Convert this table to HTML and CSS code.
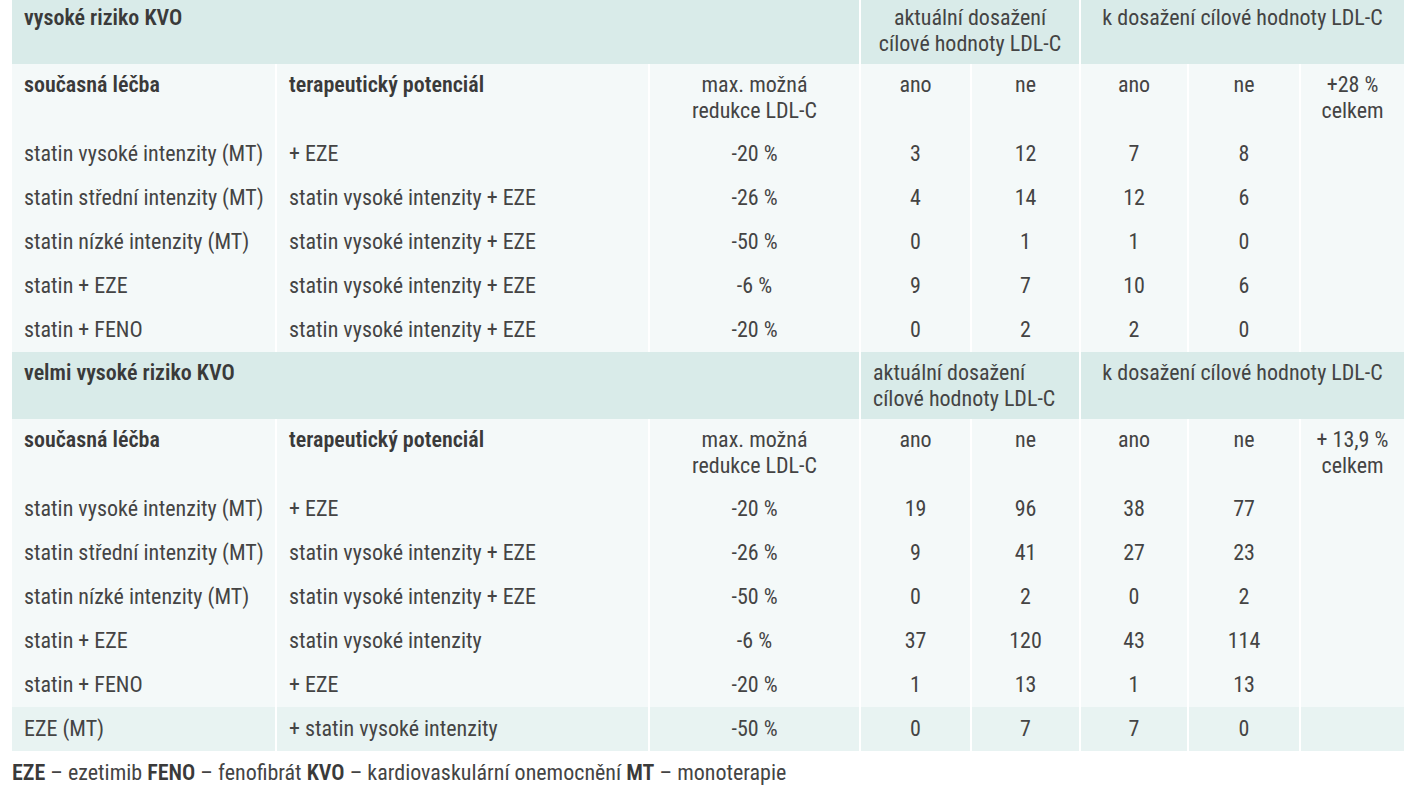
FILE: index.html
```html
<!DOCTYPE html>
<html lang="cs">
<head>
<meta charset="utf-8">
<title>Tabulka</title>
<link rel="stylesheet" href="styles.css">
</head>
<body>
<div class="wrap">
<table class="tbl">
<colgroup>
<col class="c1"><col class="c2"><col class="c3"><col class="c4"><col class="c5"><col class="c6"><col class="c7"><col class="c8">
</colgroup>
<tbody>
<tr class="sec sec1">
  <td colspan="3" class="sec-title">vysoké riziko KVO</td>
  <td colspan="2" class="center">aktuální dosažení<br>cílové hodnoty LDL-C</td>
  <td colspan="3" class="center">k dosažení cílové hodnoty LDL-C</td>
</tr>
<tr class="colhead">
  <td class="b">současná léčba</td>
  <td class="b">terapeutický potenciál</td>
  <td class="center">max. možná<br>redukce LDL-C</td>
  <td class="center">ano</td>
  <td class="center">ne</td>
  <td class="center">ano</td>
  <td class="center">ne</td>
  <td class="center">+28 %<br>celkem</td>
</tr>
<tr class="row"><td>statin vysoké intenzity (MT)</td><td>+ EZE</td><td class="center">-20 %</td><td class="center">3</td><td class="center">12</td><td class="center">7</td><td class="center">8</td><td></td></tr>
<tr class="row"><td>statin střední intenzity (MT)</td><td>statin vysoké intenzity + EZE</td><td class="center">-26 %</td><td class="center">4</td><td class="center">14</td><td class="center">12</td><td class="center">6</td><td></td></tr>
<tr class="row"><td>statin nízké intenzity (MT)</td><td>statin vysoké intenzity + EZE</td><td class="center">-50 %</td><td class="center">0</td><td class="center">1</td><td class="center">1</td><td class="center">0</td><td></td></tr>
<tr class="row"><td>statin + EZE</td><td>statin vysoké intenzity + EZE</td><td class="center">-6 %</td><td class="center">9</td><td class="center">7</td><td class="center">10</td><td class="center">6</td><td></td></tr>
<tr class="row"><td>statin + FENO</td><td>statin vysoké intenzity + EZE</td><td class="center">-20 %</td><td class="center">0</td><td class="center">2</td><td class="center">2</td><td class="center">0</td><td></td></tr>
<tr class="sec sec2">
  <td colspan="3" class="sec-title">velmi vysoké riziko KVO</td>
  <td colspan="2" class="left">aktuální dosažení<br>cílové hodnoty LDL-C</td>
  <td colspan="3" class="center">k dosažení cílové hodnoty LDL-C</td>
</tr>
<tr class="colhead">
  <td class="b">současná léčba</td>
  <td class="b">terapeutický potenciál</td>
  <td class="center">max. možná<br>redukce LDL-C</td>
  <td class="center">ano</td>
  <td class="center">ne</td>
  <td class="center">ano</td>
  <td class="center">ne</td>
  <td class="center">+ 13,9 %<br>celkem</td>
</tr>
<tr class="row"><td>statin vysoké intenzity (MT)</td><td>+ EZE</td><td class="center">-20 %</td><td class="center">19</td><td class="center">96</td><td class="center">38</td><td class="center">77</td><td></td></tr>
<tr class="row"><td>statin střední intenzity (MT)</td><td>statin vysoké intenzity + EZE</td><td class="center">-26 %</td><td class="center">9</td><td class="center">41</td><td class="center">27</td><td class="center">23</td><td></td></tr>
<tr class="row"><td>statin nízké intenzity (MT)</td><td>statin vysoké intenzity + EZE</td><td class="center">-50 %</td><td class="center">0</td><td class="center">2</td><td class="center">0</td><td class="center">2</td><td></td></tr>
<tr class="row"><td>statin + EZE</td><td>statin vysoké intenzity</td><td class="center">-6 %</td><td class="center">37</td><td class="center">120</td><td class="center">43</td><td class="center">114</td><td></td></tr>
<tr class="row"><td>statin + FENO</td><td>+ EZE</td><td class="center">-20 %</td><td class="center">1</td><td class="center">13</td><td class="center">1</td><td class="center">13</td><td></td></tr>
<tr class="row last"><td>EZE (MT)</td><td>+ statin vysoké intenzity</td><td class="center">-50 %</td><td class="center">0</td><td class="center">7</td><td class="center">7</td><td class="center">0</td><td></td></tr>
</tbody>
</table>
<p class="note"><b>EZE</b> – ezetimib <b>FENO</b> – fenofibrát <b>KVO</b> – kardiovaskulární onemocnění <b>MT</b> – monoterapie</p>
</div>
</body>
</html>
```

FILE: styles.css
```css
html, body {
  margin: 0;
  padding: 0;
  background: #ffffff;
}
body {
  font-family: "Roboto Condensed", "Liberation Sans Narrow", "Roboto", sans-serif;
  color: #444444;
  font-size: 22px;
}
.wrap {
  padding: 0 8px 0 12px;
  margin-top: -3px;
}
.tbl {
  width: 1392px;
  table-layout: fixed;
  border-collapse: collapse;
}
.c1 { width: 264px; }
.c2 { width: 373px; }
.c3 { width: 211px; }
.c4 { width: 111px; }
.c5 { width: 109px; }
.c6 { width: 108px; }
.c7 { width: 112px; }
.c8 { width: 104px; }
.tbl td {
  padding: 0 12px;
  vertical-align: top;
  line-height: 26px;
  border-left: 2px solid #ffffff;
  white-space: nowrap;
}
.tbl td:first-child { border-left: 0; }
.center { text-align: center; }
.left { text-align: left; }
.b { font-weight: 600; color: #3a3a3a; }
.sec td {
  background: #d9ebe9;
  height: 67px;
  padding-top: 8px;
  box-sizing: border-box;
}
.sec-title { font-weight: 600; color: #3a3a3a; }
.colhead td {
  background: #f4f9f9;
  height: 68px;
  padding-top: 8px;
  box-sizing: border-box;
}
.row td {
  background: #f4f9f9;
  height: 44px;
  vertical-align: middle;
}
.row.last td { background: #e8f3f2; }
.note {
  margin: 10px 0 0 0;
  font-size: 22px;
  line-height: 24px;
  color: #444444;
}
.note b { font-weight: 600; color: #3a3a3a; }
```
